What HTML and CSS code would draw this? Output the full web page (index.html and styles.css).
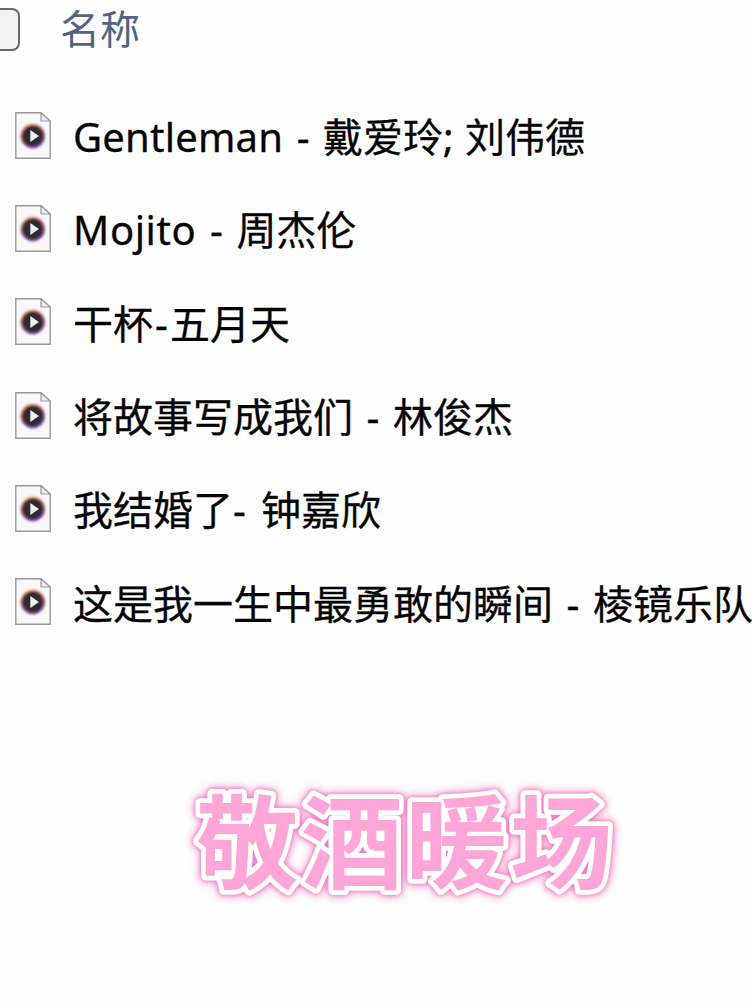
FILE: index.html
```html
<!DOCTYPE html>
<html lang="zh-CN">
<head>
    <meta charset="UTF-8">
    <meta name="viewport" content="width=device-width, initial-scale=1.0">
    <title>敬酒暖场</title>
    <link rel="stylesheet" href="styles.css">
</head>
<body>

<svg class="defs" width="0" height="0">
    <defs>
        <linearGradient id="ring" x1="0" y1="0" x2="0.3" y2="1">
            <stop offset="0" stop-color="#fbb071"/>
            <stop offset="0.5" stop-color="#bd7474"/>
            <stop offset="1" stop-color="#8a55b8"/>
        </linearGradient>
        <filter id="soft" x="-20%" y="-20%" width="140%" height="140%">
            <feGaussianBlur stdDeviation="0.8"/>
        </filter>
        <symbol id="media" viewBox="0 0 36 47">
            <path d="M.8.8H26L35.2 9V46.2H.8Z" fill="#f8f8fa" stroke="#999" stroke-width="1.4"/>
            <path d="M26 .8V9H35.2Z" fill="#ececec" stroke="#999" stroke-width="1.2"/>
            <circle cx="17.8" cy="24" r="12.4" fill="url(#ring)" filter="url(#soft)"/>
            <circle cx="17.8" cy="24" r="10.3" fill="#2d2930" filter="url(#soft)"/>
            <path d="M15.3 18V30L23.9 24Z" fill="#f0f0f0"/>
        </symbol>
    </defs>
</svg>

<div class="page">
    <div class="header">
        <span class="checkbox"></span>
        <span class="column">名称</span>
    </div>
    <ul class="files">
        <li><svg class="icon"><use href="#media"/></svg><span class="name"><span class="latin">Gentleman</span><span class="dash">-</span>戴爱玲<span class="semi">;</span>刘伟德</span></li>
        <li><svg class="icon"><use href="#media"/></svg><span class="name"><span class="latin wide">Mojito</span><span class="dash">-</span>周杰伦</span></li>
        <li><svg class="icon"><use href="#media"/></svg><span class="name">干杯<span class="dash tight">-</span>五月天</span></li>
        <li><svg class="icon"><use href="#media"/></svg><span class="name">将故事写成我们<span class="dash">-</span>林俊杰</span></li>
        <li><svg class="icon"><use href="#media"/></svg><span class="name">我结婚了<span class="dash after">-</span>钟嘉欣</span></li>
        <li><svg class="icon"><use href="#media"/></svg><span class="name">这是我一生中最勇敢的瞬间<span class="dash">-</span>棱镜乐队</span></li>
    </ul>
    <svg class="title" width="752" height="180">
        <text x="196" y="127">敬酒暖场</text>
    </svg>
</div>

</body>
</html>
```
FILE: styles.css
```css
body {
    margin: 0;
    background: #fefefe;
    color: #050505;
    font-family: "Noto Sans", "Noto Sans CJK SC", sans-serif;
}
.defs {
    display: block;
}
.page {
    height: 1002px;
    overflow: hidden;
}
.header {
    display: flex;
    align-items: flex-start;
    height: 60px;
}
.checkbox {
    box-sizing: border-box;
    width: 20px;
    height: 43px;
    margin-top: 8px;
    border: 2px solid #686868;
    border-left: 0;
    border-radius: 0 8px 8px 0;
    background: #f2f2f2;
}
.column {
    margin-left: 40px;
    color: #4f6582;
    font-size: 40px;
    line-height: 54px;
    font-family: "Noto Sans CJK SC", sans-serif;
}
.files {
    margin: 28.5px 0 0;
    padding: 0;
    list-style: none;
}
.files li {
    display: flex;
    align-items: center;
    height: 93.3px;
    padding-left: 15px;
}
.icon {
    flex: none;
    width: 36px;
    height: 47px;
}
.name {
    display: flex;
    align-items: baseline;
    margin-left: 22px;
    padding-top: 4px;
    font-size: 40px;
    line-height: 60px;
    white-space: nowrap;
    -webkit-text-stroke: 0.3px #050505;
}
.latin {
    letter-spacing: 0.2px;
}
.wide {
    letter-spacing: 0.6px;
}
.dash {
    width: 40px;
    text-align: center;
}
.tight {
    width: 17px;
}
.after {
    width: 28px;
    text-align: left;
}
.semi {
    width: 22px;
}
.title {
    display: block;
    margin-top: 105.7px;
    fill: #ffa6d8;
    stroke: #fff;
    stroke-width: 9.5px;
    stroke-linejoin: round;
    paint-order: stroke;
    font-family: "Noto Sans CJK SC", sans-serif;
    font-size: 102.5px;
    font-weight: 700;
    letter-spacing: 2.2px;
    filter: drop-shadow(0 0 2px #ee78bd) drop-shadow(0 0 4px #f57fc3);
}
```
